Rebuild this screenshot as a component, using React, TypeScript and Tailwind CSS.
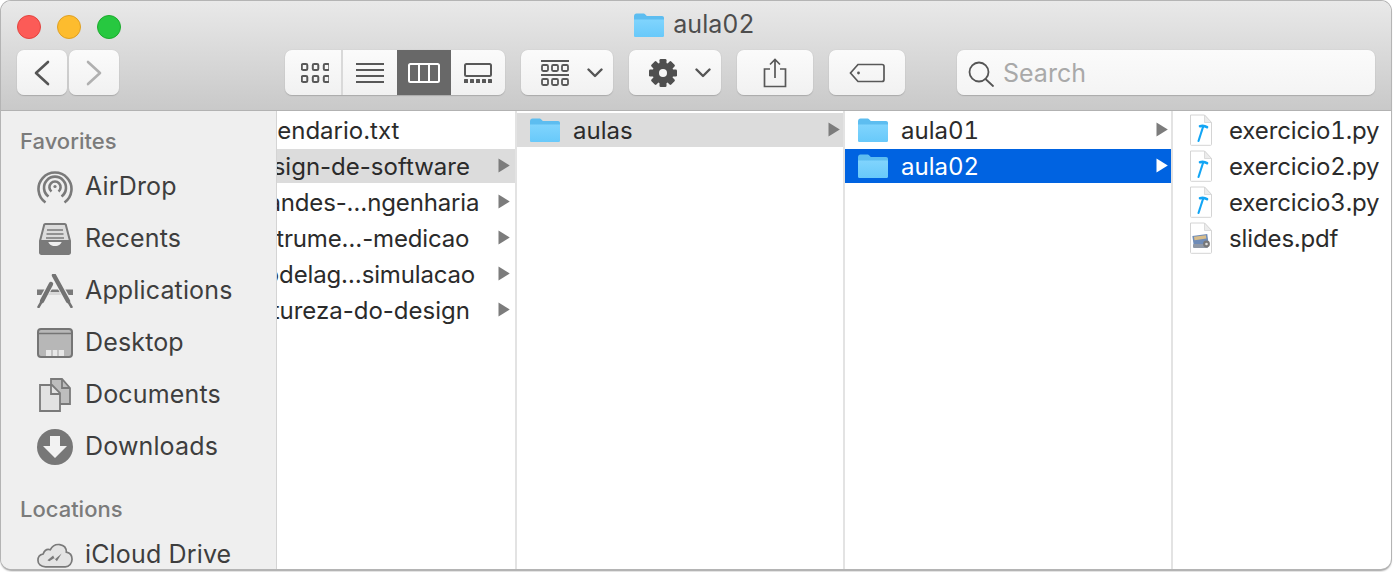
import type { ReactNode } from "react";

const FONT = "font-['Inter','Noto_Sans',sans-serif]";

const Folder = ({ className = "" }: { className?: string }) => (
  <svg viewBox="0 0 32 26" className={className}>
    <defs>
      <linearGradient id="fld" x1="0" y1="0" x2="0" y2="1">
        <stop offset="0" stopColor="#80d4fd" />
        <stop offset="1" stopColor="#68c9fa" />
      </linearGradient>
    </defs>
    <path d="M1 4.500C1 2.500 2 1.500 3.500 1.500h6.500c1.200 0 1.800.4 2.600 1.200l1.200 1.300H29c1.300 0 2 .8 2 2v17c0 1.300-.8 2-2 2H3c-1.300 0-2-.7-2-2z" fill="#5dbdf0" />
    <path d="M1 7.500h30v15.700c0 1.200-.7 1.800-1.900 1.800H2.900C1.700 25 1 24.400 1 23.200z" fill="url(#fld)" />
  </svg>
);

const DocShell = ({ children }: { children: ReactNode }) => (
  <svg viewBox="0 0 24 32" className="w-[24px] h-[32px] shrink-0">
    <path d="M1.500 1h14l7 7.500V30.500a.8.8 0 0 1-.8.8H2.300a.8.8 0 0 1-.8-.8z" fill="#fff" stroke="#d4d4d4" />
    <path d="M15.500 1v7.500h7z" fill="#ececec" stroke="#d4d4d4" strokeWidth="0.8" />
    {children}
  </svg>
);

const PyIcon = () => (
  <DocShell>
    <path d="M11 12.200c2.500-.7 5-.3 7 1" fill="none" stroke="#12a5f5" strokeWidth="2.600" strokeLinecap="round" />
    <path d="M14 13 9.500 27" fill="none" stroke="#12a5f5" strokeWidth="2.100" strokeLinecap="round" />
  </DocShell>
);

const PdfIcon = () => (
  <DocShell>
    <rect x="4" y="13" width="15" height="10" fill="#6f8cb8" transform="rotate(-8 11 18)" />
    <rect x="5.500" y="14" width="12" height="3.500" fill="#d9bd8a" transform="rotate(-8 11 18)" />
    <rect x="4" y="22" width="15" height="4" rx="1" fill="#8f98a6" />
    <circle cx="17.500" cy="22" r="3.400" fill="#777" />
    <circle cx="17.500" cy="22" r="1.300" fill="#dedede" />
  </DocShell>
);

const Arrow = ({ color }: { color: string }) => (
  <svg viewBox="0 0 12 15" className={`w-[12px] h-[15px] shrink-0 mb-[2px] ${color}`}>
    <path d="M0.500 0.500 11.800 7.500 0.500 14.500z" fill="currentColor" />
  </svg>
);

const SHADOW = "shadow-[0_0_1px_#b8b8b8,0_1px_1px_#a9a9a9]";

const ToolBtn = ({ w, children }: { w: string; children: ReactNode }) => (
  <div className={`${w} h-[45px] pt-[1px] flex items-center justify-center bg-gradient-to-b from-[#fbfbfb] to-[#f1f1f1] rounded-[7px] ${SHADOW}`}>
    {children}
  </div>
);

const Chevron = () => (
  <svg viewBox="0 0 16 10" className="w-[16px] h-[10px]" fill="none" stroke="#555" strokeWidth="2.400" strokeLinecap="round" strokeLinejoin="round">
    <path d="M1.500 1.500 8 8l6.500-6.500" />
  </svg>
);

const gridCells = [0, 11, 22].flatMap((x) => [0, 1].map((r) => ({ x, r })));

const IconView = () => (
  <svg viewBox="0 0 28 20" className="w-[28px] h-[20px]" fill="none" stroke="#585858" strokeWidth="2">
    {gridCells.map((c) => (
      <rect key={`${c.x}-${c.r}`} x={c.x + 0.8} y={c.r * 12 + 1} width="5.500" height="6" rx="1.300" />
    ))}
  </svg>
);

const ListView = () => (
  <svg viewBox="0 0 28 20" className="w-[28px] h-[20px]" stroke="#585858" strokeWidth="2">
    <path d="M0 1h28M0 7h28M0 13h28M0 19h28" />
  </svg>
);

const ColumnView = () => (
  <svg viewBox="0 0 32 20" className="w-[32px] h-[20px]" fill="none" stroke="#fff" strokeWidth="2">
    <rect x="1" y="1" width="30" height="18" rx="1.500" />
    <path d="M11 1v18M21 1v18" />
  </svg>
);

const GalleryView = () => (
  <svg viewBox="0 0 28 20" className="w-[28px] h-[20px]">
    <rect x="1" y="1" width="26" height="12" rx="1.500" fill="none" stroke="#585858" strokeWidth="2" />
    {[0, 6, 12, 18, 24].map((x) => (
      <rect key={x} x={x} y="16" width="4" height="4" rx="0.600" fill="#585858" />
    ))}
  </svg>
);

const ArrangeIcon = () => (
  <svg viewBox="0 0 28 26" className="w-[28px] h-[26px]" fill="none" stroke="#585858" strokeWidth="1.800">
    <path d="M0 1h28M0 15h28" strokeWidth="2" />
    {[0, 10, 20].map((x) => (
      <g key={x}>
        <rect x={x + 1} y="5" width="6" height="6" rx="1.200" />
        <rect x={x + 1} y="19" width="6" height="6" rx="1.200" />
      </g>
    ))}
  </svg>
);

const GearIcon = () => (
  <svg viewBox="0 0 28 28" className="w-[28px] h-[28px]">
    {[0, 45, 90, 135].map((a) => (
      <rect key={a} x="10.500" y="0" width="7" height="28" rx="1.200" fill="#4f4f4f" transform={`rotate(${a} 14 14)`} />
    ))}
    <circle cx="14" cy="14" r="10.500" fill="#4f4f4f" />
    <circle cx="14" cy="14" r="4" fill="#f6f6f6" />
  </svg>
);

const ShareIcon = () => (
  <svg viewBox="0 0 24 30" className="w-[24px] h-[30px]" fill="none" stroke="#585858" strokeWidth="1.700">
    <path d="M7 11H1.500v17.500h21V11H17" />
    <path d="M12 20V1.500M7 6.500l5-5 5 5" />
  </svg>
);

const TagIcon = () => (
  <svg viewBox="0 0 36 20" className="w-[36px] h-[20px]" fill="none" stroke="#585858" strokeWidth="1.700">
    <path d="M9 1.500h24a2 2 0 0 1 2 2v13a2 2 0 0 1-2 2H9L1.500 10z" />
    <circle cx="9.500" cy="10" r="1.400" fill="#585858" stroke="none" />
  </svg>
);

const AirDrop = () => (
  <svg viewBox="0 0 36 36" className="w-[36px] h-[36px]" fill="none" stroke="#7a7a7a" strokeWidth="2.600">
    <path d="M8.500 33.500a16.500 16.500 0 1 1 19 0" />
    <path d="M11.500 27.500a11 11 0 1 1 13 0" />
    <path d="M14.500 22.500a5.600 5.600 0 1 1 7 0" />
    <circle cx="18" cy="17.500" r="1.600" fill="#7a7a7a" stroke="none" />
  </svg>
);

const Recents = () => (
  <svg viewBox="0 0 32 32" className="w-[32px] h-[32px]">
    <path d="M5 2.500C5 1.500 5.800 1 6.500 1h19c.8 0 1.500.5 1.500 1.500L31 18H1z" fill="#dcdcdc" stroke="#7a7a7a" strokeWidth="2" />
    <path d="M8 7h16M7.500 11h17M7 15h18" stroke="#7a7a7a" strokeWidth="1.600" />
    <path d="M0 18h9c1 3.500 3 5 7 5s6-1.500 7-5h9v11.500c0 1.500-1 2.500-2.500 2.500h-27C1 32 0 31 0 29.500z" fill="#7a7a7a" />
  </svg>
);

const Applications = () => (
  <svg viewBox="0 0 36 34" className="w-[36px] h-[34px]">
    <path d="M0 15.500h36v5.500H0z" fill="#7a7a7a" />
    <path d="M12 19.500h12" stroke="#d8d8d8" strokeWidth="3" />
    <path d="M17 1.500 33 30" stroke="#efefef" strokeWidth="6.500" />
    <path d="M17 1.500 31 27" stroke="#737373" strokeWidth="4.400" strokeLinecap="round" />
    <path d="M31 27 34.500 33" stroke="#737373" strokeWidth="2.500" strokeLinecap="round" />
    <path d="M14 10 3 30" stroke="#efefef" strokeWidth="6.500" />
    <path d="M14 10 5 27" stroke="#737373" strokeWidth="4.400" strokeLinecap="round" />
    <path d="M5 27 1.500 33" stroke="#737373" strokeWidth="2.500" strokeLinecap="round" />
  </svg>
);

const Desktop = () => (
  <svg viewBox="0 0 36 30" className="w-[36px] h-[30px]">
    <rect x="1" y="1" width="34" height="28" rx="3" fill="#b7b7b7" stroke="#757575" strokeWidth="2" />
    <path d="M1 5.500h34" stroke="#757575" strokeWidth="1.600" />
    <rect x="9" y="22" width="18" height="6" fill="#e8e8e8" />
    <path d="M15 22v6M21 22v6" stroke="#a0a0a0" />
  </svg>
);

const Documents = () => (
  <svg viewBox="0 0 32 34" className="w-[32px] h-[34px]" stroke="#7a7a7a" strokeWidth="1.800">
    <path d="M12 1h11l8 9v16H12z" fill="#bdbdbd" />
    <path d="M23 1v9h8" fill="none" />
    <path d="M1 7h12l8 8v18H1z" fill="#e2e2e2" />
    <path d="M12 7v9h9" fill="none" />
  </svg>
);

const Downloads = () => (
  <svg viewBox="0 0 36 36" className="w-[36px] h-[36px]">
    <circle cx="18" cy="18" r="18" fill="#777" />
    <path d="M13 7h10v10h7L18 29 6 17h7z" fill="#f2f2f2" />
  </svg>
);

const ICloud = () => (
  <svg viewBox="0 0 38 26" className="w-[36px] h-[25px]">
    <path d="M9 25C4 25 1 22 1 18c0-3.400 2.400-6 5.500-6.600C8 7.500 11 6 14 7 16 3 20 1 24 1.500c4.500.6 7 4 7 8 4 .8 6 4 6 7.500 0 4-3 8-7 8z" fill="#e4e4e4" stroke="#7a7a7a" strokeWidth="1.800" />
    <path d="M11 18l6-5 2 4 7-6-5 8-3-3-5 3z" fill="#7a7a7a" />
  </svg>
);

const SideItem = ({ icon, label }: { icon: ReactNode; label: string }) => (
  <div className="h-[52px] flex items-center">
    <div className="w-[36px] ml-[36px] mr-[12px] flex justify-center">{icon}</div>
    <span className="text-[25px] tracking-[0.15px] text-[#3e3e3e] whitespace-nowrap">{label}</span>
  </div>
);

const ClippedRow = ({ label, selected, arrow = true, tight }: { label: string; selected?: boolean; arrow?: boolean; tight?: boolean }) => (
  <div className={`h-[34px] flex items-center ${selected ? "bg-[#dcdcdc]" : ""}`}>
    <div className="flex-1 min-w-0 overflow-hidden">
      <div className={`ml-[-33px] mt-[2px] text-[24px] leading-[32px] text-[#2b2b2b] whitespace-nowrap ${tight ? "tracking-[-0.15px]" : ""}`}>{label}</div>
    </div>
    {arrow && <div className="w-[17px] flex"><Arrow color="text-[#7c7c7c]" /></div>}
  </div>
);

const FolderRow = ({ label, state }: { label: string; state?: "active" | "inactive" }) => (
  <div className={`h-[34px] flex items-center pl-[12px] pr-[3px] ${state === "active" ? "bg-[#0063e1]" : state === "inactive" ? "bg-[#dcdcdc]" : ""}`}>
    <Folder className="w-[32px] h-[26px] shrink-0" />
    <span className={`ml-[12px] mt-[2px] flex-1 text-[24px] tabular-nums ${state === "active" ? "text-white" : "text-[#2b2b2b]"}`}>{label}</span>
    <Arrow color={state === "active" ? "text-white" : "text-[#7c7c7c]"} />
  </div>
);

const FileRow = ({ icon, label }: { icon: ReactNode; label: string }) => (
  <div className="h-[34px] flex items-center pl-[16px]">
    {icon}
    <span className="ml-[16px] mt-[2px] text-[24px] tabular-nums tracking-[-0.1px] text-[#2b2b2b] whitespace-nowrap">{label}</span>
  </div>
);

export default function App() {
  return (
    <div className={`w-[1394px] h-[572px] bg-white overflow-hidden pl-[1px] pt-[1px] ${FONT}`}>
      <div className="w-[1390px] h-[568px] rounded-[10px] overflow-hidden flex flex-col bg-white shadow-[0_0_0_1px_#b4b4b4,0_2px_2px_#9a9a9a]">
        {/* Toolbar */}
        <div className="h-[110px] shrink-0 bg-gradient-to-b from-[#e9e9e9] to-[#c9c9c9] border-b border-[#b2b2b2]">
          <div className="grid grid-cols-[1fr_auto_1fr] items-center h-[49px] pl-[16px] pr-[4px]">
            <div className="flex gap-[16px] pt-[2px]">
              <div className="w-[24px] h-[24px] rounded-full bg-[#fc5b57] border border-[#e3443f]" />
              <div className="w-[24px] h-[24px] rounded-full bg-[#fdbc2e] border border-[#dfa023]" />
              <div className="w-[24px] h-[24px] rounded-full bg-[#27c840] border border-[#1cab2d]" />
            </div>
            <div className="flex items-center gap-[8px] mr-[16px] mb-[2px]">
              <Folder className="w-[32px] h-[26px]" />
              <span className="text-[25px] tabular-nums text-[#4d4d4d]">aula02</span>
            </div>
            <div />
          </div>
          <div className="flex items-center pl-[16px] h-[45px]">
            <div className="flex gap-[2px]">
              <ToolBtn w="w-[50px]">
                <svg viewBox="0 0 16 26" className="w-[16px] h-[26px]" fill="none" stroke="#555" strokeWidth="2.600" strokeLinecap="round" strokeLinejoin="round"><path d="M14 2 2 13l12 11" /></svg>
              </ToolBtn>
              <ToolBtn w="w-[50px]">
                <svg viewBox="0 0 16 26" className="w-[16px] h-[26px]" fill="none" stroke="#b0b0b0" strokeWidth="2.600" strokeLinecap="round" strokeLinejoin="round"><path d="M2 2l12 11L2 24" /></svg>
              </ToolBtn>
            </div>
            <div className={`ml-[166px] w-[220px] h-[45px] flex rounded-[7px] overflow-hidden bg-gradient-to-b from-[#fbfbfb] to-[#f1f1f1] ${SHADOW}`}>
              <div className="w-[58px] pt-[1px] pl-[3px] flex items-center justify-center border-r-2 border-[#d9d9d9]"><IconView /></div>
              <div className="w-[54px] pt-[1px] flex items-center justify-center"><ListView /></div>
              <div className="w-[54px] pt-[1px] flex items-center justify-center bg-[#686868]"><ColumnView /></div>
              <div className="w-[54px] pt-[1px] flex items-center justify-center"><GalleryView /></div>
            </div>
            <div className="ml-[16px]">
              <ToolBtn w="w-[92px]">
                <div className="flex items-center gap-[18px] pl-[10px]"><ArrangeIcon /><Chevron /></div>
              </ToolBtn>
            </div>
            <div className="ml-[16px]">
              <ToolBtn w="w-[92px]">
                <div className="flex items-center gap-[18px] pl-[10px]"><GearIcon /><Chevron /></div>
              </ToolBtn>
            </div>
            <div className="ml-[16px]"><ToolBtn w="w-[76px]"><ShareIcon /></ToolBtn></div>
            <div className="ml-[16px]"><ToolBtn w="w-[76px]"><TagIcon /></ToolBtn></div>
            <div className={`ml-[52px] w-[418px] h-[45px] pt-[3px] flex items-center pl-[11px] gap-[9px] rounded-[7px] bg-gradient-to-b from-[#fbfbfb] to-[#f4f4f4] ${SHADOW}`}>
              <svg viewBox="0 0 26 26" className="w-[26px] h-[26px]" fill="none" stroke="#555" strokeWidth="1.800" strokeLinecap="round">
                <circle cx="11" cy="11" r="9.500" />
                <path d="M17.500 18 25 25" />
              </svg>
              <span className="text-[25px] text-[#a9a9a9]">Search</span>
            </div>
          </div>
        </div>

        {/* Body */}
        <div className="flex-1 min-h-0 flex">
          <aside className="w-[276px] shrink-0 bg-[#efefef] border-r border-[#d4d4d4] overflow-hidden">
            <div className="pl-[19px] pt-[17px] h-[50px] text-[22px] leading-[26px] font-medium text-[#7b7b7b]">Favorites</div>
            <SideItem icon={<AirDrop />} label="AirDrop" />
            <SideItem icon={<Recents />} label="Recents" />
            <SideItem icon={<Applications />} label="Applications" />
            <SideItem icon={<Desktop />} label="Desktop" />
            <SideItem icon={<Documents />} label="Documents" />
            <SideItem icon={<Downloads />} label="Downloads" />
            <div className="pl-[19px] pt-[23px] h-[56px] text-[22px] leading-[26px] font-medium text-[#7b7b7b]">Locations</div>
            <SideItem icon={<ICloud />} label="iCloud Drive" />
          </aside>
          <div className="w-[240px] shrink-0 border-r-2 border-[#e3e3e3] pt-[2px] flex flex-col gap-[2px] overflow-hidden">
            <ClippedRow label="calendario.txt" arrow={false} />
            <ClippedRow label="design-de-software" selected />
            <ClippedRow label="grandes-…ngenharia" tight />
            <ClippedRow label="instrume…-medicao" tight />
            <ClippedRow label="modelag…simulacao" tight />
            <ClippedRow label="natureza-do-design" />
          </div>
          <div className="w-[328px] shrink-0 border-r-2 border-[#e3e3e3] pt-[2px] flex flex-col gap-[2px]">
            <FolderRow label="aulas" state="inactive" />
          </div>
          <div className="w-[328px] shrink-0 border-r-2 border-[#e3e3e3] pt-[2px] flex flex-col gap-[2px]">
            <FolderRow label="aula01" />
            <FolderRow label="aula02" state="active" />
          </div>
          <div className="flex-1 min-w-0 pt-[2px] flex flex-col gap-[2px] overflow-hidden">
            <FileRow icon={<PyIcon />} label="exercicio1.py" />
            <FileRow icon={<PyIcon />} label="exercicio2.py" />
            <FileRow icon={<PyIcon />} label="exercicio3.py" />
            <FileRow icon={<PdfIcon />} label="slides.pdf" />
          </div>
        </div>
      </div>
    </div>
  );
}
